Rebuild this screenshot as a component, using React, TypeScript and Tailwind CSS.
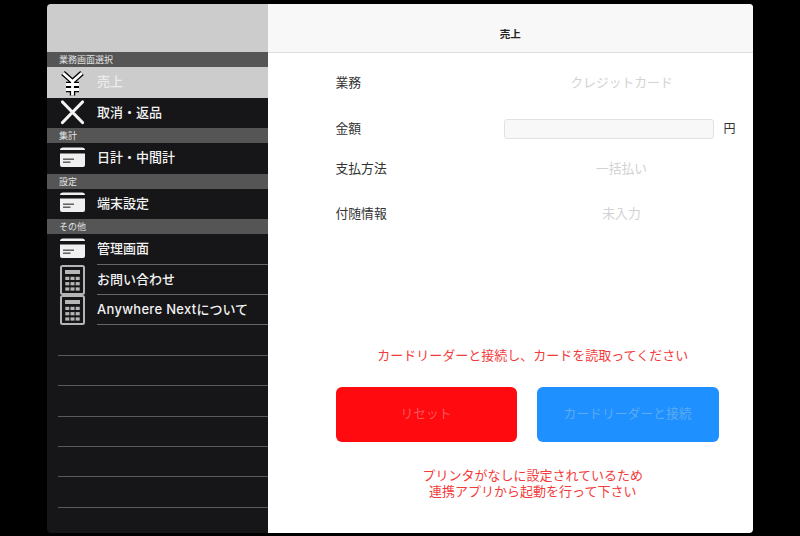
const font = { fontFamily: 'Inter, "Noto Sans CJK JP", "Noto Sans", sans-serif' };

function YenIcon() {
  const d = 'M6 6 L15.5 14.5 L25 6 M15.5 14.5 V28.5 M9 17.5 H22 M9 22.5 H22';
  return (
    <svg width="31" height="30" viewBox="0 0 31 30" fill="none">
      <path d={d} stroke="#000" strokeWidth="5.4" />
      <path d={d} stroke="#fff" strokeWidth="2.8" />
    </svg>
  );
}

function CrossIcon() {
  return (
    <svg width="31" height="29" viewBox="0 0 31 29" fill="none">
      <path d="M5.5 4 L25.5 24.5 M25.5 4 L5.5 24.5" stroke="#f4f4f4" strokeWidth="3.2" strokeLinecap="round" />
    </svg>
  );
}

function CardIcon() {
  return (
    <svg width="31" height="25" viewBox="0 0 31 25">
      <path d="M3 4 Q3 1.5 6 1.5 H25 Q28 1.5 28 4 Z" fill="#f0f0f0" />
      <path d="M3 7.5 H28 V19 Q28 21 26 21 H5 Q3 21 3 19 Z" fill="#f0f0f0" />
      <rect x="6" y="12.5" width="11" height="1.4" fill="#555" />
      <rect x="6" y="15.5" width="7.5" height="1.4" fill="#555" />
    </svg>
  );
}

function CalcIcon() {
  const cells = [];
  for (let r = 0; r < 3; r++) {
    for (let c = 0; c < 3; c++) {
      cells.push(<rect key={`${r}-${c}`} x={8.3 + c * 5.2} y={11.8 + r * 5.3} width="4" height="3.2" fill="#b5b5b5" />);
    }
  }
  return (
    <svg width="31" height="30" viewBox="0 0 31 30" fill="none">
      <rect x="4" y="1" width="23" height="28" rx="1.5" stroke="#b5b5b5" strokeWidth="2" />
      <rect x="8" y="5" width="15" height="4" fill="#b5b5b5" />
      {cells}
    </svg>
  );
}

function Section({ label }: { label: string }) {
  return (
    <div className="flex h-[15.2px] items-center bg-[#555555] pl-[12px] text-[9px] leading-[15px] text-[#e4e4e4]">
      {label}
    </div>
  );
}

function Item({ icon, label, active, line }: { icon: React.ReactNode; label: React.ReactNode; active?: boolean; line?: boolean }) {
  return (
    <div className={`flex h-[30.4px] items-center pl-[10px] ${active ? 'bg-[#cccccc]' : ''}`}>
      <div className="flex w-[40px] shrink-0 items-center">{icon}</div>
      <div
        className={`flex h-full flex-1 items-center text-[13px] font-medium ${active ? 'text-[#ececec]' : 'text-[#f2f2f2]'} ${line ? 'border-b border-[#666666]' : 'pb-[1px]'}`}
      >
        <span>{label}</span>
      </div>
    </div>
  );
}

function Row({ label, height, children }: { label: string; height: string; children: React.ReactNode }) {
  return (
    <div className={`flex items-center pl-[68px] ${height}`}>
      <div className="w-[168px] shrink-0 pb-[1px] text-[12.8px] text-[#333333]">{label}</div>
      {children}
    </div>
  );
}

function Value({ text }: { text: string }) {
  return <div className="w-[236px] pb-[1px] text-center text-[12.8px] text-[#d2d2d2]">{text}</div>;
}

export default function App() {
  return (
    <div className="flex h-[536px] w-[800px] bg-black pb-[3px] pl-[47px] pr-[47px] pt-[4px]" style={font}>
      <div className="flex w-full overflow-hidden rounded-[4px]">
        <aside className="flex w-[220.5px] shrink-0 flex-col bg-[#161618]">
          <div className="h-[48px] bg-[#cccccc]" />
          <Section label="業務画面選択" />
          <Item icon={<YenIcon />} label="売上" active />
          <Item icon={<CrossIcon />} label="取消・返品" />
          <Section label="集計" />
          <Item icon={<CardIcon />} label="日計・中間計" />
          <Section label="設定" />
          <Item icon={<CardIcon />} label="端末設定" />
          <Section label="その他" />
          <Item icon={<CardIcon />} label="管理画面" line />
          <Item icon={<CalcIcon />} label="お問い合わせ" line />
          <Item
            icon={<CalcIcon />}
            label={
              <>
                <span className="tracking-[0.3px]">Anywhere Next</span>について
              </>
            }
            line
          />
          {[0, 1, 2, 3, 4, 5].map((i) => (
            <div key={i} className="ml-[11px] h-[30.4px] border-b border-[#5a5a5a]" />
          ))}
        </aside>
        <main className="flex flex-1 flex-col bg-white">
          <header className="flex h-[49px] shrink-0 items-end justify-center border-b border-[#dddddd] bg-[#f8f8f8] pb-[9px] text-[10.5px] font-bold text-[#222222]">
            <span>売上</span>
          </header>
          <Row label="業務" height="h-[60px]">
            <Value text="クレジットカード" />
          </Row>
          <Row label="金額" height="h-[32px]">
            <div className="h-[20px] w-[210px] rounded-[3px] border border-[#e2e2e2] bg-[#f8f8f8]" />
            <div className="ml-[10px] text-[12px] text-[#333333]">円</div>
          </Row>
          <Row label="支払方法" height="h-[48px]">
            <Value text="一括払い" />
          </Row>
          <Row label="付随情報" height="h-[42px]">
            <Value text="未入力" />
          </Row>
          <div className="mt-[110px] pl-[45px] text-center text-[13px] leading-[20px] text-[#f23c3c]">
            カードリーダーと接続し、カードを読取ってください
          </div>
          <div className="mt-[22px] flex gap-[20px] pl-[68px]">
            <button className="h-[55px] w-[181px] rounded-[6px] bg-[#ff0a0f] pb-[2px] text-[12.8px] text-[#f8575c]">リセット</button>
            <button className="h-[55px] w-[182px] rounded-[6px] bg-[#1e90ff] pb-[2px] text-[12.8px] text-[#5cabf3]">
              カードリーダーと接続
            </button>
          </div>
          <div className="mt-[25px] pl-[45px] text-center text-[13px] leading-[16px] text-[#f23c3c]">
            <div>プリンタがなしに設定されているため</div>
            <div>連携アプリから起動を行って下さい</div>
          </div>
        </main>
      </div>
    </div>
  );
}
